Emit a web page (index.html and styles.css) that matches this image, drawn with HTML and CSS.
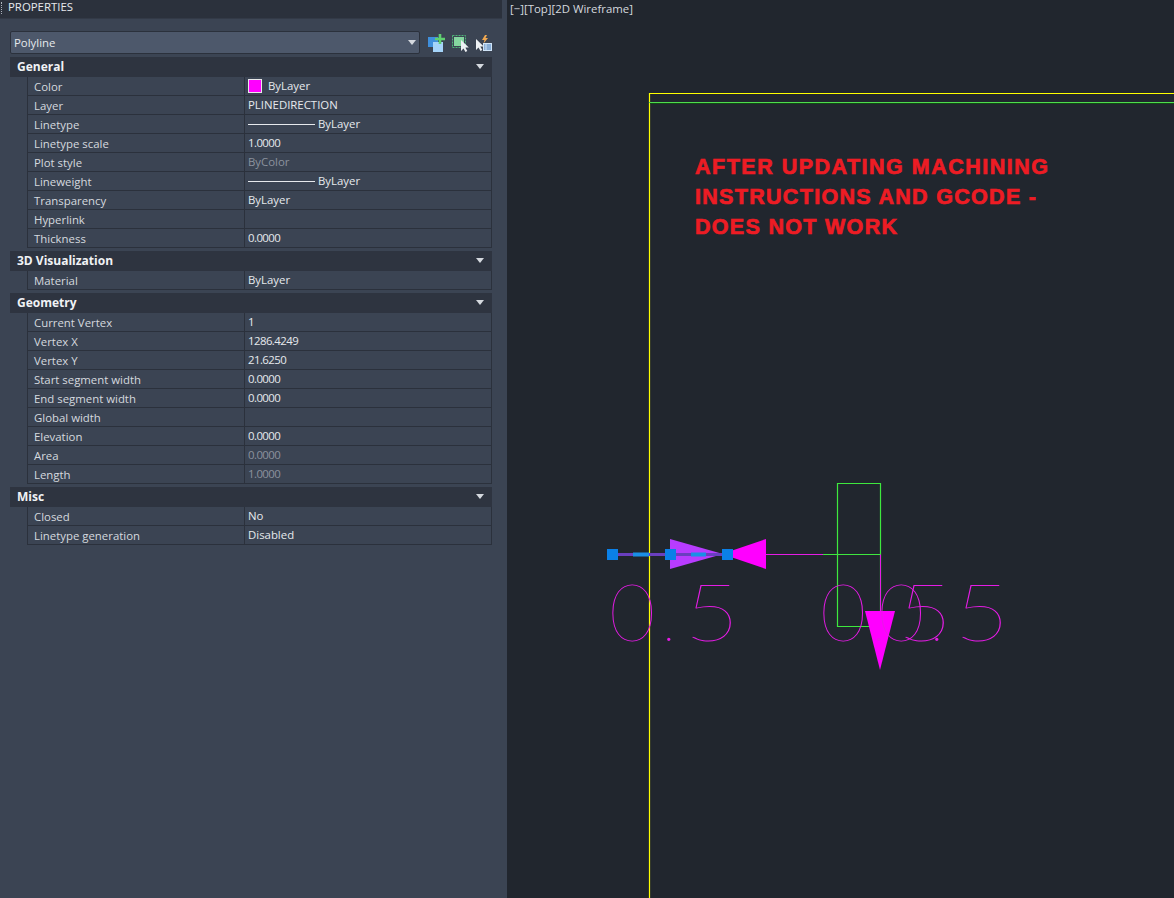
FILE: index.html
```html
<!DOCTYPE html>
<html lang="en">
<head>
<meta charset="utf-8">
<title>Properties</title>
<link rel="stylesheet" href="styles.css">
</head>
<body>
<div class="app">
  <aside class="palette">
    <header class="titlebar"><span class="grip"></span><span class="title">PROPERTIES</span></header>
    <div class="toolbar">
      <div class="select"><span>Polyline</span><i class="caret"></i></div>
      <div class="tools">
        <svg class="ico" viewBox="0 0 18 18"><rect x="0" y="3" width="10" height="10" fill="#3f8fdc"/><rect x="5" y="8" width="10" height="10" fill="#a5d4fa"/><path d="M12 0v10M7 5h10" stroke="#5fd070" stroke-width="2.600"/></svg>
        <svg class="ico" viewBox="0 0 18 18"><rect x="2" y="3" width="10" height="9" fill="#85d6a0"/><rect x=".5" y="1.500" width="13" height="12" fill="none" stroke="#4fb578" stroke-dasharray="2 1"/><path d="M9 6v11l2.500-2.500 2 3.500 1.800-1-2-3.500h3.500z" fill="#eef1f4"/></svg>
        <svg class="ico" viewBox="0 0 18 18"><path d="M0 5v11l2.500-2.500 2 3.500 1.800-1-2-3.500h3.500z" fill="#eef1f4"/><path d="M9 1l-3 5h2.500l-1 3.500 4.500-5.500h-2.500l1.500-3z" fill="#f0a850"/><rect x="7" y="9" width="9" height="8" fill="#cfe3f7"/><path d="M8 11h1.500M10.500 11h4.500M8 13h1.500M10.500 13h4.500M8 15h1.500M10.500 15h4.500" stroke="#3f76b5" stroke-width="1"/></svg>
      </div>
    </div>
    <section class="group">
      <h3 class="group-head">General<i class="caret"></i></h3>
      <div class="row"><span class="k">Color</span><span class="v"><i class="swatch"></i>ByLayer</span></div>
      <div class="row"><span class="k">Layer</span><span class="v">PLINEDIRECTION</span></div>
      <div class="row"><span class="k">Linetype</span><span class="v"><i class="ltype"></i>ByLayer</span></div>
      <div class="row"><span class="k">Linetype scale</span><span class="v num">1.0000</span></div>
      <div class="row"><span class="k">Plot style</span><span class="v dim">ByColor</span></div>
      <div class="row"><span class="k">Lineweight</span><span class="v"><i class="ltype"></i>ByLayer</span></div>
      <div class="row"><span class="k">Transparency</span><span class="v">ByLayer</span></div>
      <div class="row"><span class="k">Hyperlink</span><span class="v"></span></div>
      <div class="row"><span class="k">Thickness</span><span class="v num">0.0000</span></div>
    </section>
    <section class="group">
      <h3 class="group-head">3D Visualization<i class="caret"></i></h3>
      <div class="row"><span class="k">Material</span><span class="v">ByLayer</span></div>
    </section>
    <section class="group">
      <h3 class="group-head">Geometry<i class="caret"></i></h3>
      <div class="row"><span class="k">Current Vertex</span><span class="v num">1</span></div>
      <div class="row"><span class="k">Vertex X</span><span class="v num">1286.4249</span></div>
      <div class="row"><span class="k">Vertex Y</span><span class="v num">21.6250</span></div>
      <div class="row"><span class="k">Start segment width</span><span class="v num">0.0000</span></div>
      <div class="row"><span class="k">End segment width</span><span class="v num">0.0000</span></div>
      <div class="row"><span class="k">Global width</span><span class="v"></span></div>
      <div class="row"><span class="k">Elevation</span><span class="v num">0.0000</span></div>
      <div class="row"><span class="k">Area</span><span class="v dim num">0.0000</span></div>
      <div class="row"><span class="k">Length</span><span class="v dim num">1.0000</span></div>
    </section>
    <section class="group">
      <h3 class="group-head">Misc<i class="caret"></i></h3>
      <div class="row"><span class="k">Closed</span><span class="v">No</span></div>
      <div class="row"><span class="k">Linetype generation</span><span class="v">Disabled</span></div>
    </section>
  </aside>
  <main class="viewport">
    <div class="vp-label">[−][Top][2D Wireframe]</div>
    <svg class="drawing" viewBox="0 0 667 898" width="667" height="898">
      <path d="M142.500 898V93.500H667" fill="none" stroke="#ffff00" stroke-width="1.200"/>
      <path d="M142 102.500H667" stroke="#4fdc4f" stroke-width="1"/>
      <path d="M143 103.500H667" stroke="#124a14" stroke-width="1"/>
      <path d="M330.500 483.500h43v143h-43z M316 554.500h57" fill="none" stroke="#3ee83e" stroke-width="1.200"/>
      <path d="M259 554.500h57M373.500 554.500V612" fill="none" stroke="#e51ce5" stroke-width="1"/>
      <path d="M259 539v30l-44-15z" fill="#ff00ff"/>
      <path d="M163 539v30l53-15z" fill="#b83cff"/>
      <path d="M358 611h30l-15 59z" fill="#ff00ff"/>
      <path d="M110 554.500h105" stroke="#6a3fbf" stroke-width="3"/>
      <path d="M126 554.500h16M184 554.500h15" stroke="#1a8fe6" stroke-width="4"/>
      <rect x="100" y="549" width="11" height="11" fill="#0a80e8"/>
      <rect x="158" y="549" width="11" height="11" fill="#0a80e8"/>
      <rect x="215" y="549" width="11" height="11" fill="#0a80e8"/>
      <text class="cad" y="641"><tspan x="102">0</tspan><tspan class="dot" x="156">.</tspan></text>
      <text class="cad" transform="translate(177 641) scale(1.2 1)">5</text>
      <text class="cad" y="641"><tspan x="313">0</tspan><tspan class="dot" x="366">.</tspan></text>
      <text class="cad" transform="translate(390 641) scale(1.2 1)">5</text>
      <text class="cad" y="641"><tspan x="371">0</tspan><tspan class="dot" x="424">.</tspan></text>
      <text class="cad" transform="translate(447 641) scale(1.2 1)">5</text>
      <text class="note" x="188" y="174" textLength="353">AFTER UPDATING MACHINING</text>
      <text class="note" x="188" y="204" textLength="341">INSTRUCTIONS AND GCODE -</text>
      <text class="note" x="188" y="234" textLength="202">DOES NOT WORK</text>
    </svg>
  </main>
</div>
</body>
</html>
```
FILE: styles.css
```css
* { box-sizing: border-box; }
html, body { margin: 0; height: 100%; }
body { background: #21262e; font: 11.4px "Open Sans", "Noto Sans", sans-serif; color: #e6e9ed; overflow: hidden; }
.app { display: flex; width: 1174px; height: 898px; }
.palette { width: 507px; flex: none; background: #3b4453; padding-bottom: 8px; }
.titlebar { width: 502px; height: 18px; background: #2b313c; display: flex; align-items: flex-start; gap: 5px; padding-left: 1px; box-shadow: 0 1px 0 #333a47; }
.grip { width: 2px; height: 12px; margin-top: 2px; border-left: 1px dotted #aeb4bd; }
.title { color: #e6e9ed; line-height: 14px; }
.toolbar { display: flex; align-items: center; margin: 13px 0 3px 10px; height: 23px; }
.select { width: 410px; height: 23px; background: #4d586b; border: 1px solid #2b313c; border-radius: 2px; display: flex; align-items: center; justify-content: space-between; padding: 0 3px 1px; }
.caret { display: block; width: 0; height: 0; border: 4px solid transparent; border-top: 5px solid #d5d9df; border-bottom: 0; }
.tools { display: flex; gap: 6px; margin-left: 8px; }
.ico { width: 18px; height: 18px; display: block; }
.group { width: 482px; margin-left: 10px; margin-bottom: 3px; }
.group-head { margin: 0; height: 20px; background: #2e3440; font-size: 12px; font-weight: 700; color: #f0f2f5; display: flex; align-items: center; justify-content: space-between; padding: 0 8px 2px 7px; }
.row { height: 19px; margin-left: 17px; display: grid; grid-template-columns: 217px 1fr; border-bottom: 1px solid #2b313c; border-left: 1px solid #2b313c; border-right: 1px solid #2b313c; background: #3b4453; }
.k { padding-left: 6px; color: #d5d9df; line-height: 19px; border-right: 1px solid #2b313c; }
.v { padding: 0 0 1px 3px; color: #e6e9ed; line-height: 16px; display: flex; align-items: center; white-space: nowrap; }
.num { letter-spacing: -.55px; }
.dim { color: #8b929e; }
.swatch { width: 14px; height: 14px; background: #ff00ff; border: 1px solid #e8e8e8; margin-right: 6px; }
.ltype { width: 67px; height: 1px; background: #e6e9ed; margin-right: 3px; }
.viewport { flex: 1; position: relative; background: #21262e; overflow: hidden; }
.vp-label { position: absolute; left: 3px; top: 1px; color: #d5d9df; }
.drawing { display: block; }
.cad { font-family: "Lato", sans-serif; font-weight: 100; font-size: 80px; fill: #e51ce5; }
.dot { font-size: 50px; }
.note { font-family: "Liberation Sans", sans-serif; font-weight: 700; font-size: 21.5px; fill: #ed1c24; stroke: #ed1c24; stroke-width: .7px; }
```
